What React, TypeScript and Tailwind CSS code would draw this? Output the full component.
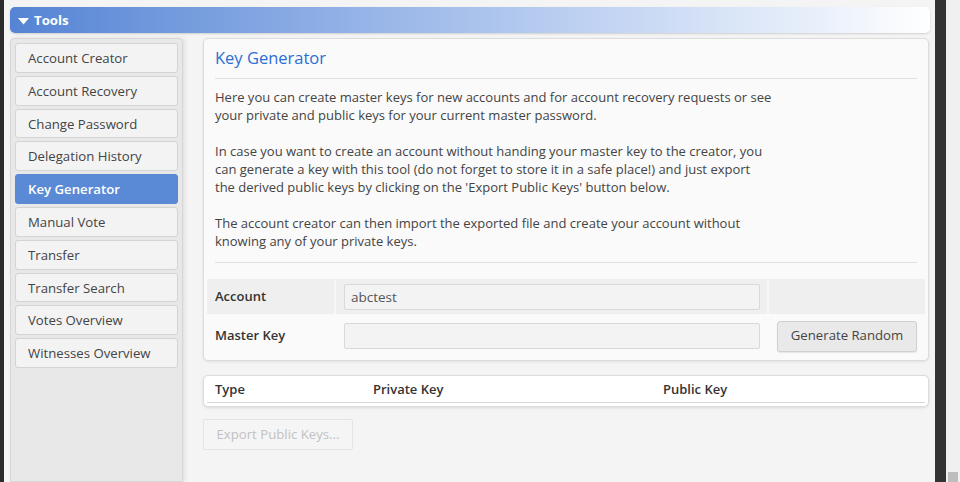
const menu = [
  "Account Creator",
  "Account Recovery",
  "Change Password",
  "Delegation History",
  "Key Generator",
  "Manual Vote",
  "Transfer",
  "Transfer Search",
  "Votes Overview",
  "Witnesses Overview",
];

export default function App() {
  return (
    <div
      className="flex h-[482px] w-[960px] overflow-hidden text-[#444]"
      style={{ fontFamily: '"Open Sans", "Noto Sans", sans-serif' }}
    >
      <div className="w-[4px] bg-[#2b2b2b]" />
      <div className="flex w-[931px] flex-col bg-[#f4f4f4] pl-[6px] pr-[5px] pt-[7px]">
        {/* Tools header */}
        <div className="flex h-[26px] items-center rounded-[5px] bg-gradient-to-r from-[#5584d4] via-[#a9c2ec] to-[#ffffff] pl-[8px] pt-[1px] shadow-[0_1px_2px_rgba(0,0,0,0.15)]">
          <svg width="11" height="8" viewBox="0 0 11 8" className="mr-[5px]">
            <path d="M0 1 L11 1 L5.5 7.5 Z" fill="#fff" />
          </svg>
          <span className="text-[13.2px] font-bold text-white">Tools</span>
        </div>

        <div className="mt-[5px] flex flex-1 gap-[20px]">
          {/* Sidebar */}
          <div className="flex w-[173px] flex-col gap-[3px] rounded-t-[4px] border border-[#d6d6d6] bg-[#e8e8e8] px-[4px] pt-[4px] shadow-[2px_0_4px_rgba(0,0,0,0.08)]">
            {menu.map((m) => {
              const active = m === "Key Generator";
              return (
                <div
                  key={m}
                  className={
                    active
                      ? "flex h-[29.8px] items-center rounded-[3px] border border-[#5a88d4] bg-[#5a8ad6] pl-[12px] pt-[2px] text-[13.2px] font-semibold text-white"
                      : "flex h-[29.8px] items-center rounded-[3px] border border-[#d4d4d4] bg-[#f3f3f3] pl-[12px] pt-[2px] text-[13.2px] text-[#444]"
                  }
                >
                  {m}
                </div>
              );
            })}
          </div>

          {/* Main content */}
          <div className="flex w-[726px] flex-col">
            <div className="rounded-[5px] border border-[#dcdcdc] bg-[#fafafa] px-[3px] pb-[4px] shadow-[0_1px_3px_rgba(0,0,0,0.08)]">
              <div className="px-[8px]">
                <div className="flex h-[39px] items-end pb-[7px] text-[16.5px] font-medium text-[#2a6fd6]">
                  Key Generator
                </div>
                <div className="border-t border-[#dedede]" />
                <div className="pt-[9px] text-[13px] leading-[18px] text-[#444]">
                  <p>
                    Here you can create master keys for new accounts and for account recovery requests or see
                    <br />
                    your private and public keys for your current master password.
                  </p>
                  <p className="mt-[18px]">
                    In case you want to create an account without handing your master key to the creator, you
                    <br />
                    can generate a key with this tool (do not forget to store it in a safe place!) and just export
                    <br />
                    the derived public keys by clicking on the 'Export Public Keys' button below.
                  </p>
                  <p className="mt-[18px]">
                    The account creator can then import the exported file and create your account without
                    <br />
                    knowing any of your private keys.
                  </p>
                </div>
                <div className="mt-[12px] border-t border-[#dedede]" />
              </div>
              <div className="mt-[16px]">
                <div className="flex h-[35px] bg-[#efefef] pt-[1px]">
                  <div className="flex w-[127px] items-center pl-[8px] text-[13px] font-semibold text-[#333]">
                    Account
                  </div>
                  <div className="flex w-[435px] items-center border-l-2 border-r-2 border-[#f7f7f7] pl-[8px] pr-[7px]">
                    <div className="flex h-[26px] w-full items-center rounded-[2px] border border-[#d8d8d8] bg-[#f3f3f3] px-[6px] text-[13.5px] text-[#555]">
                      abctest
                    </div>
                  </div>
                  <div className="flex-1" />
                </div>
                <div className="flex h-[42px] pt-[2px]">
                  <div className="flex w-[127px] items-center pl-[8px] text-[13px] font-semibold text-[#333]">
                    Master Key
                  </div>
                  <div className="flex w-[435px] items-center pl-[10px] pr-[9px]">
                    <div className="h-[26px] w-full rounded-[2px] border border-[#d8d8d8] bg-[#f3f3f3]" />
                  </div>
                  <div className="flex flex-1 items-center pl-[8px]">
                    <button className="h-[31px] w-[140px] rounded-[3px] border border-[#cfcfcf] bg-[#e9e9e9] text-[13.2px] text-[#444] shadow-[0_1px_1px_rgba(0,0,0,0.08)]">
                      Generate Random
                    </button>
                  </div>
                </div>
              </div>
            </div>

            <div className="mt-[14px] rounded-[5px] border border-[#dcdcdc] bg-white px-[3px] shadow-[0_1px_3px_rgba(0,0,0,0.1)]">
              <div className="flex h-[27px] border-b border-[#d8d8d8] pt-[2px] text-[13px] font-semibold text-[#333]">
                <div className="flex w-[158px] items-center pl-[8px]">Type</div>
                <div className="flex w-[290px] items-center pl-[8px]">Private Key</div>
                <div className="flex flex-1 items-center pl-[8px]">Public Key</div>
              </div>
              <div className="h-[3px]" />
            </div>

            <div className="mt-[12px]">
              <button className="h-[31px] w-[150px] rounded-[2px] border border-[#e4e4e4] bg-[#f5f5f5] text-[13.2px] text-[#c2c2c2]">
                Export Public Keys...
              </button>
            </div>
          </div>
        </div>
      </div>
      <div className="w-[11px] bg-[#333333]" />
      <div className="relative w-[14px] bg-[#f0f0f0]">
        <div className="absolute bottom-0 left-[2px] h-[10px] w-[10px] bg-[#bdbdbd]" />
      </div>
    </div>
  );
}
